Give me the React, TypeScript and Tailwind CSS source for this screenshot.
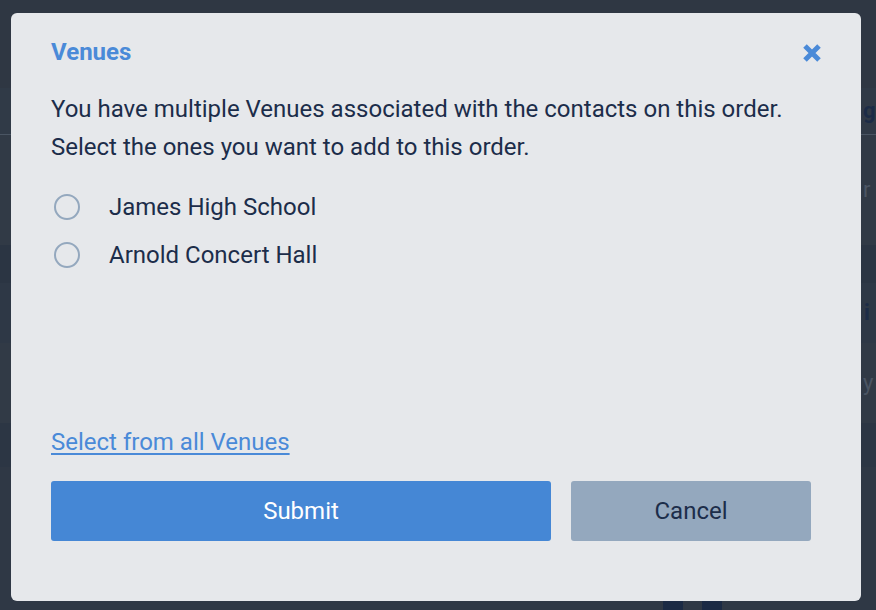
import React from 'react';

const venues = ['James High School', 'Arnold Concert Hall'];

function CloseIcon() {
  return (
    <svg width="20" height="20" viewBox="0 0 20 20" className="block">
      <path d="M3 3 L17 17 M17 3 L3 17" stroke="#4a8ad8" strokeWidth="5" strokeLinecap="butt" fill="none" />
    </svg>
  );
}

// dimmed page behind the modal, only its right edge peeks out
function BackgroundPage() {
  return (
    <div className="flex h-full w-full flex-col bg-[#2f3845]">
      <div className="h-[88px] bg-[#2f3743]" />
      <div className="flex h-[47px] items-center border-b border-[#4a5563] bg-[#303a47]">
        <span className="ml-[863px] text-[22px] font-bold leading-none text-[#1c2c47]">g</span>
      </div>
      <div className="flex h-[110px] items-center bg-[#313a46]">
        <span className="ml-[863px] text-[22px] leading-none text-[#4b5563]">r</span>
      </div>
      <div className="h-[38px] bg-[#2b3543]" />
      <div className="flex h-[60px] items-center bg-[#2e3846]">
        <span className="ml-[864px] text-[22px] font-bold leading-none text-[#1c2c47]">i</span>
      </div>
      <div className="flex h-[80px] items-center bg-[#313a46]">
        <span className="ml-[863px] text-[22px] leading-none text-[#4b5563]">y</span>
      </div>
      <div className="h-[44px] bg-[#2c3644]" />
      <div className="flex-1 bg-[#2f3845]" />
      <div className="flex h-[9px] items-end bg-[#2f3845]">
        <div className="ml-[663px] h-[9px] w-[20px] bg-[#1b2a44]" />
        <div className="ml-[19px] h-[9px] w-[20px] bg-[#1b2a44]" />
      </div>
    </div>
  );
}

export default function App() {
  return (
    <div
      className="relative h-[610px] w-[876px] overflow-hidden"
      style={{ fontFamily: 'Roboto, "Liberation Sans", sans-serif' }}
    >
      <BackgroundPage />

      <div className="absolute left-[11px] top-[13px] flex h-[588px] w-[850px] flex-col rounded-[6px] bg-[#e6e8eb] pb-[60px] pl-[40px] pr-[40px] pt-[25px]">
        <div className="flex items-center justify-between">
          <h2 className="text-[24px] font-bold leading-[28px] text-[#4a8ad8]">Venues</h2>
          <button className="mr-[-1px] mt-[1px]">
            <CloseIcon />
          </button>
        </div>

        <p className="mt-[24px] text-[24px] leading-[38px] text-[#1c2d4a]">
          You have multiple Venues associated with the contacts on this order.
          <br />
          Select the ones you want to add to this order.
        </p>

        <div className="mt-[17px] flex flex-col">
          {venues.map(v => (
            <label key={v} className="flex h-[48px] items-center">
              <span className="ml-[3px] h-[26px] w-[26px] rounded-full border-[2.5px] border-[#94a8be]" />
              <span className="ml-[29px] text-[24px] text-[#1c2d4a]">{v}</span>
            </label>
          ))}
        </div>

        <div className="mt-auto">
          <a href="#" className="text-[24px] leading-[30px] text-[#4a8ad8] underline underline-offset-[3px]">
            Select from all Venues
          </a>
          <div className="mt-[24px] flex gap-[20px]">
            <button className="h-[60px] w-[500px] rounded-[3px] bg-[#4587d5] text-[24px] text-white">Submit</button>
            <button className="h-[60px] w-[240px] rounded-[3px] bg-[#94a8be] text-[24px] text-[#1c2d4a]">Cancel</button>
          </div>
        </div>
      </div>
    </div>
  );
}
